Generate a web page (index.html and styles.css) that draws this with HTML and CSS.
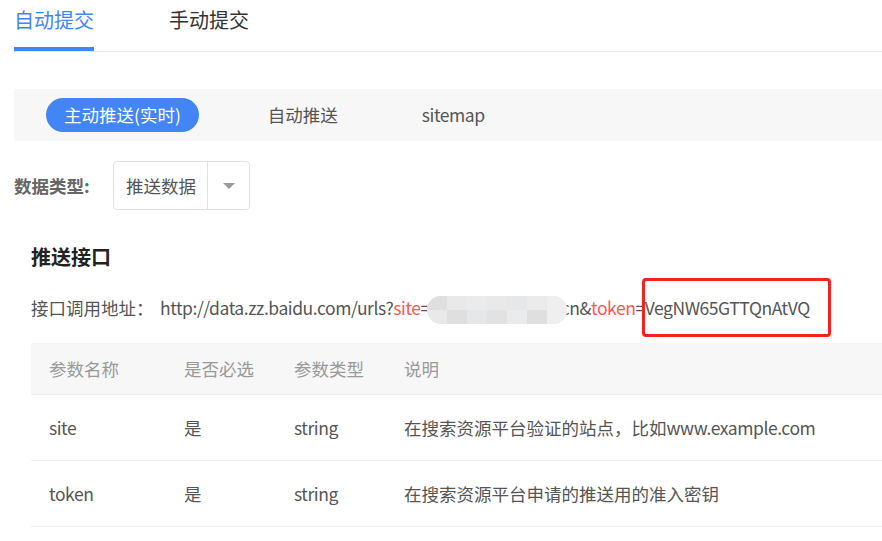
FILE: index.html
```html
<!DOCTYPE html>
<html lang="zh-CN">
<head>
<meta charset="utf-8">
<title>自动提交</title>
<link rel="stylesheet" href="styles.css">
</head>
<body>
<div class="page">
  <nav class="tabs">
    <a class="tab active">自动提交</a>
    <a class="tab">手动提交</a>
  </nav>

  <div class="subbar">
    <span class="sub active">主动推送(实时)</span>
    <span class="sub">自动推送</span>
    <span class="sub latin">sitemap</span>
  </div>

  <div class="filter">
    <span class="filter-label">数据类型:</span>
    <div class="select">
      <span class="select-value">推送数据</span>
      <span class="select-arrow"><i class="tri"></i></span>
    </div>
  </div>

  <section class="api">
    <h2 class="api-title">推送接口</h2>
    <p class="api-url">
      <span class="url-label">接口调用地址：</span><span class="url">http://data.zz.baidu.com/urls?<span class="param">site</span>=<span class="blur"><i></i><i></i><i></i><i></i><i></i><i></i><i></i><i></i><i></i><i></i><i></i><i></i><i></i><i></i></span>cn&amp;<span class="param">token</span>=<span class="token">VegNW65GTTQnAtVQ</span></span>
    </p>

    <table class="params">
      <thead>
        <tr><th class="c1">参数名称</th><th class="c2">是否必选</th><th class="c3">参数类型</th><th>说明</th></tr>
      </thead>
      <tbody>
        <tr><td class="latin">site</td><td>是</td><td class="latin">string</td><td>在搜索资源平台验证的站点，比如<span class="latin">www.example.com</span></td></tr>
        <tr><td class="latin">token</td><td>是</td><td class="latin">string</td><td>在搜索资源平台申请的推送用的准入密钥</td></tr>
      </tbody>
    </table>
  </section>
</div>
</body>
</html>
```

FILE: styles.css
```css
html, body {
  margin: 0;
  padding: 0;
  background: #fff;
  overflow: hidden;
}
body {
  font-family: "Noto Sans CJK SC", "Noto Sans", sans-serif;
  font-size: 17.5px;
  color: #555;
}
.page {
  padding-left: 14px;
}
.latin {
  letter-spacing: -0.45px;
}

/* top tabs */
.tabs {
  display: flex;
  gap: 75px;
  height: 51px;
  border-bottom: 1px solid #e8e8e8;
}
.tab {
  display: block;
  font-size: 20px;
  line-height: 40px;
  height: 47px;
  color: #333;
  box-sizing: border-box;
}
.tab.active {
  color: #4285f4;
  border-bottom: 4px solid #4285f4;
  height: 51px;
}

/* sub bar */
.subbar {
  margin-top: 37px;
  height: 52px;
  background: #f7f7f7;
  display: flex;
  align-items: center;
  padding-left: 32px;
  gap: 51px;
}
.sub {
  display: block;
  padding: 0 18px;
  line-height: 34px;
  height: 34px;
  color: #555;
  border-radius: 17px;
}
.sub.active {
  background: #4285f4;
  color: #fff;
}
.sub.latin {
  margin-left: -3px;
}

/* filter */
.filter {
  margin-top: 20px;
  display: flex;
  align-items: center;
}
.filter-label {
  font-weight: bold;
  color: #666;
  width: 99px;
}
.select {
  display: flex;
  height: 49px;
  border: 1px solid #e2e2e2;
  border-radius: 4px;
  box-sizing: border-box;
}
.select-value {
  width: 94px;
  padding-left: 12px;
  box-sizing: border-box;
  line-height: 47px;
  border-right: 1px solid #e2e2e2;
}
.select-arrow {
  width: 41px;
  display: flex;
  align-items: center;
  justify-content: center;
}
.tri {
  width: 0;
  height: 0;
  border-left: 6px solid transparent;
  border-right: 6px solid transparent;
  border-top: 6px solid #999;
}

/* api section */
.api {
  padding-left: 17px;
}
.api-title {
  margin: 33px 0 0;
  font-size: 20px;
  line-height: 28px;
  font-weight: bold;
  color: #222;
}
.api-url {
  margin: 23px 0 0;
  line-height: 28px;
  height: 28px;
  white-space: nowrap;
  color: #555;
}
.url-label {
  display: inline-block;
  width: 129px;
}
.url {
  letter-spacing: -0.45px;
}
.param {
  color: #f55;
}
.blur {
  display: inline-grid;
  grid-template-columns: repeat(7, 20px);
  grid-template-rows: 14px 14px;
  width: 140px;
  height: 28px;
  margin: 0 -6px 0 -3px;
  border-radius: 14px;
  overflow: hidden;
  vertical-align: middle;
  background: #e9e9e9;
  position: relative;
}
.blur i:nth-child(odd) { background: #e2e2e2; }
.blur i:nth-child(3n) { background: #ebebeb; }
.blur i:nth-child(4n+1) { background: #dfdfdf; }
.blur i:nth-child(5n) { background: #e6e7e9; }
.blur i:nth-child(7n) { background: #efefef; }
.token {
  position: relative;
}
.token::after {
  content: "";
  position: absolute;
  left: -3px;
  right: -21px;
  top: -17px;
  bottom: -17px;
  border: 3px solid #f5221e;
  border-radius: 4px;
}

/* table */
.params {
  margin-top: 21px;
  width: 851px;
  border-collapse: collapse;
  table-layout: fixed;
}
.params th, .params td {
  text-align: left;
  padding: 0 0 0 18px;
  font-weight: normal;
  border-bottom: 1px solid #eeeeee;
  white-space: nowrap;
}
.params th {
  height: 51px;
  background: #f7f7f7;
  color: #999;
}
.params td {
  height: 65px;
  color: #555;
}
.params .c1 { width: 117px; }
.params .c2 { width: 92px; }
.params .c3 { width: 92px; }
```
